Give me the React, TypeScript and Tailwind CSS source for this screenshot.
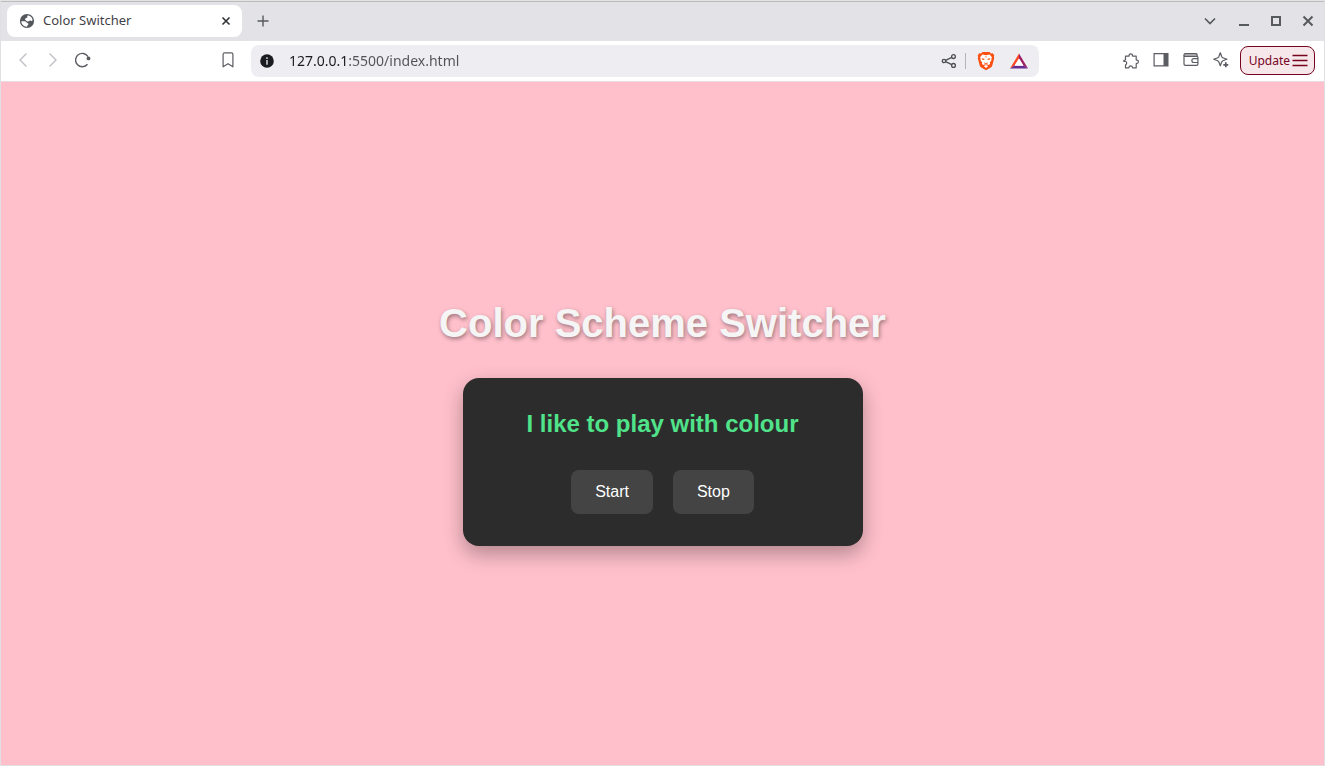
import { useEffect, useState, type ReactNode } from "react";

const SCHEMES = ["#ffc0cb", "#add8e6", "#98fb98", "#ffdab9", "#d8bfd8"];

function IconButton({ label, className = "", children }: { label: string; className?: string; children: ReactNode }) {
  return (
    <button type="button" aria-label={label} className={`flex shrink-0 items-center justify-center ${className}`}>
      {children}
    </button>
  );
}

function GlobeIcon() {
  return (
    <svg width="16" height="16" viewBox="0 0 16 16" aria-hidden="true" className="shrink-0">
      <circle cx="8" cy="8" r="7.100" fill="#54585c" />
      <path d="M8.600 2.400c1.500 0 2.700.6 3.600 1.600.8.9 1.300 2 1.400 3.300-.5.900-1.500.7-2.200.3-.5-.3-.9.100-1.300.5-.6.500-1.600.500-2.200.1-.7-.3-.6-1.100-1.300-1.200-.9-.2-.9-1.200-.2-1.600.8-.4 1.600-.2 1.900-.9.200-.7-.3-1.400.3-2.100Z" fill="#fff" />
      <path d="M2.300 8.300h3.400c1.300.1 1.700.7 2.100 1.400.400.600 1.500.3 1.700 1.100.2.900-.9 1-1 1.700-.1.600-.2 1.100-.6 1.200-3.100 0-5.600-2.300-5.600-5.400Z" fill="#fff" />
    </svg>
  );
}

function BraveIcon() {
  return (
    <svg width="18" height="20" viewBox="0 0 18 20" aria-hidden="true">
      <path d="M5.500 1h7l1.500 1.400 1.800-.1 1.500 2.300-.5 1.500.4 1.200-1.900 7.100q-.4 1.300-1.500 2L9 19.300l-4.800-2.900q-1.100-.7-1.500-2L.8 7.300l.4-1.200-.5-1.500 1.500-2.300 1.800.1Z" fill="#fb4f12" />
      <path d="M5.300 3.600L9 4.200l3.700-.6 2.200 2.600-.6 1.900.3.900-1.800 2.500.3 1.500-1.800 1-1-.7-1.300.4-1.300-.4-1 .7-1.800-1 .3-1.500L3.400 9l.3-.9-.6-1.900Z" fill="#fff" />
      <path d="M9 13.900l2.300 1.200L9 16.900l-2.300-1.800Z" fill="#fff" />
      <path d="M4.400 7.300l3.100.4-.3 1.400-1.700-.4ZM13.600 7.300l-3.100.4.3 1.400 1.700-.4ZM7.500 11.300L9 12.500l1.500-1.200.3.900L9 13.400l-1.800-1.200ZM8.300 5.200h1.400L9 7Z" fill="#fb4f12" />
    </svg>
  );
}

function TabStrip() {
  return (
    <header className="flex h-[39px] items-center bg-[#e3e2e7] pb-0.5 pl-1.5">
      <div className="flex h-8 w-[235px] items-center rounded-lg bg-white pr-2 pl-3">
        <GlobeIcon />
        <span className="ml-2 flex-1 truncate text-[13px] text-[#3f4247]">Color Switcher</span>
        <IconButton label="Close tab" className="size-4">
          <svg width="10" height="10" viewBox="0 0 10 10" stroke="#303236" strokeWidth="1.600" aria-hidden="true">
            <path d="M1.500 1.500l7 7M8.500 1.500l-7 7" />
          </svg>
        </IconButton>
      </div>
      <IconButton label="New tab" className="ml-[5px] size-8">
        <svg width="12" height="12" viewBox="0 0 12 12" stroke="#56595e" strokeWidth="1.400" aria-hidden="true">
          <path d="M6 .5v11M.5 6h11" />
        </svg>
      </IconButton>
      <div className="ml-auto flex items-center">
        <IconButton label="Search tabs" className="mr-0.5 size-8">
          <svg width="12" height="12" viewBox="0 0 12 12" fill="none" stroke="#56595e" strokeWidth="1.700" aria-hidden="true">
            <path d="M1 3.500l5 5 5-5" />
          </svg>
        </IconButton>
        <IconButton label="Minimize" className="size-8">
          <svg width="12" height="12" viewBox="0 0 12 12" aria-hidden="true">
            <path d="M1 9h10v2H1z" fill="#56595e" />
          </svg>
        </IconButton>
        <IconButton label="Maximize" className="size-8">
          <svg width="12" height="12" viewBox="0 0 12 12" fill="none" stroke="#56595e" strokeWidth="2" aria-hidden="true">
            <path d="M2 2h8v8H2z" />
          </svg>
        </IconButton>
        <IconButton label="Close window" className="size-8">
          <svg width="12" height="12" viewBox="0 0 12 12" stroke="#56595e" strokeWidth="2" aria-hidden="true">
            <path d="M1.500 1.500l9 9M10.500 1.500l-9 9" />
          </svg>
        </IconButton>
      </div>
    </header>
  );
}

function AddressBar() {
  return (
    <div className="ml-2 flex h-8 flex-1 items-center rounded-lg bg-[#eeedf2] pr-2.5 pl-[9px]">
      <svg width="14" height="14" viewBox="0 0 14 14" aria-hidden="true" className="shrink-0">
        <circle cx="7" cy="7" r="6.800" fill="#1b1b22" />
        <path d="M6.200 3.300h1.600v1.600H6.200zM6.200 6h1.600v4.700H6.200z" fill="#c9c9d0" />
      </svg>
      <input
        type="text"
        aria-label="Address"
        defaultValue="127.0.0.1:5500/index.html"
        spellCheck={false}
        className="ml-[15px] min-w-0 flex-1 bg-[linear-gradient(to_right,#1b1b20_60px,#505257_60px)] bg-clip-text text-sm text-transparent caret-black outline-none"
      />
      <IconButton label="Share" className="size-6">
        <svg width="16" height="16" viewBox="0 0 16 16" fill="none" stroke="#4c4e54" strokeWidth="1.300" aria-hidden="true">
          <circle cx="3" cy="8" r="1.700" />
          <circle cx="12.500" cy="3.600" r="1.900" />
          <circle cx="12.500" cy="12.400" r="1.900" />
          <path d="M4.600 7.300l6.200-2.900M4.600 8.700l6.200 2.900" />
        </svg>
      </IconButton>
      <span className="mx-1 h-4 w-px bg-[#b4b4b9]" />
      <IconButton label="Brave Shields" className="ml-1.5 h-6 w-5">
        <BraveIcon />
      </IconButton>
      <IconButton label="Brave Rewards" className="ml-[13px] h-6 w-5">
        <svg width="18" height="16" viewBox="0 0 18 16" aria-hidden="true">
          <path d="M9 .5L0 15.500l4.500-2.700L9 5.500Z" fill="#ff4724" />
          <path d="M9 .5v5l4.500 7.300 4.500 2.700Z" fill="#9e1f63" />
          <path d="M0 15.500h18l-4.500-2.900h-9Z" fill="#662d91" />
          <path d="M9 5.500l4.500 7.200h-9Z" fill="#fff" />
        </svg>
      </IconButton>
    </div>
  );
}

function Toolbar() {
  return (
    <nav aria-label="Browser toolbar" className="flex h-10 items-center bg-white pr-[9px] pl-[7px]">
      <IconButton label="Back" className="h-8 w-[30px] pb-0.5">
        <svg width="16" height="16" viewBox="0 0 16 16" fill="none" stroke="#bfc0c4" strokeWidth="1.400" aria-hidden="true">
          <path d="M11.500 1.500L5 8l6.500 6.500" />
        </svg>
      </IconButton>
      <IconButton label="Forward" className="h-8 w-[30px] pb-0.5">
        <svg width="16" height="16" viewBox="0 0 16 16" fill="none" stroke="#bfc0c4" strokeWidth="1.400" aria-hidden="true">
          <path d="M4.500 1.500L11 8l-6.500 6.500" />
        </svg>
      </IconButton>
      <IconButton label="Reload" className="h-8 w-[30px] pb-0.5">
        <svg width="16" height="16" viewBox="0 0 16 16" fill="none" stroke="#5b5d63" strokeWidth="1.400" aria-hidden="true">
          <path d="M12.500 12.300A6.700 6.700 0 1 1 13 4.600" />
          <circle cx="13.500" cy="6.400" r="1.900" fill="#5b5d63" stroke="none" />
        </svg>
      </IconButton>
      <IconButton label="Bookmark this tab" className="ml-[115px] h-8 w-[30px] pb-0.5">
        <svg width="12" height="16" viewBox="0 0 12 16" fill="none" stroke="#5b5d63" strokeWidth="1.200" strokeLinejoin="round" aria-hidden="true">
          <path d="M2.600.8h6.800q1.500 0 1.500 1.500v12.500L6 11.700l-4.900 3.100V2.300Q1.100.8 2.600.8Z" />
        </svg>
      </IconButton>
      <AddressBar />
      <div className="ml-[77px] flex items-center">
        <IconButton label="Extensions" className="h-8 w-[30px]">
          <svg width="16" height="16" viewBox="0 0 16 16" fill="none" stroke="#5b5d63" strokeWidth="1.200" strokeLinejoin="round" aria-hidden="true">
            <path d="M2.500 3.200h3.300c.3 0 .4-.3.300-.6C5.900 1.500 6.800.8 7.700.8s1.900.7 1.700 1.800c-.1.300.1.600.4.600h3.400v3.500c0 .4.300.5.600.4.900-.1 1.600.7 1.600 1.600s-.7 1.800-1.600 1.700c-.3-.1-.6 0-.6.400v4.100H9.900c-.4 0-.5-.3-.5-.6 0-.9-.8-1.500-1.700-1.500s-1.700.6-1.700 1.500c0 .300-.1.600-.5.600h-3v-2.500c0-.5.2-.7.500-.9.500-.3.700-.9.700-1.400 0-.9-.6-1.600-1.500-1.600H.900V7.300h.7c.5 0 .9-.3.900-.8Z" />
          </svg>
        </IconButton>
        <IconButton label="Side panel" className="h-8 w-[30px] pb-0.5">
          <svg width="16" height="16" viewBox="0 0 16 16" fill="none" aria-hidden="true">
            <path d="M1.100 1.600h13.800v12.300H1.100z" stroke="#5b5d63" strokeWidth="1.200" />
            <path d="M10.500 1.500H15v12.500h-4.500z" fill="#5b5d63" />
          </svg>
        </IconButton>
        <IconButton label="Wallet" className="h-8 w-[30px] pb-0.5">
          <svg width="16" height="16" viewBox="0 0 16 16" fill="none" stroke="#5b5d63" strokeWidth="1.200" aria-hidden="true">
            <path d="M1 4V3q0-1.300 1.300-1.300h10.800q1 0 1 1V4" fill="#bcbdc0" />
            <path d="M1 3.500v8.600q0 1.300 1.300 1.300h11.400q1.200 0 1.200-1.300V5.500q0-1.200-1.200-1.200H1" />
            <path d="M15 6.600h-4.200a1.900 1.900 0 0 0 0 3.900H15" />
          </svg>
        </IconButton>
        <IconButton label="Leo AI" className="h-8 w-[30px] pb-0.5">
          <svg width="16" height="16" viewBox="0 0 16 16" fill="none" stroke="#5b5d63" strokeWidth="1.200" strokeLinejoin="round" aria-hidden="true">
            <path d="M7.300.8l1.500 4 1 1 4.100 1.500-4.100 1.500-1 1-1.500 4-1.500-4-1-1L.7 7.300l4.100-1.500 1-1Z" />
            <path d="M12.800 10.300v5M10.300 12.800h5" strokeWidth="1.700" />
          </svg>
        </IconButton>
      </div>
      <button
        type="button"
        className="mb-px ml-1 flex h-[29px] shrink-0 items-center gap-0.5 rounded-lg border border-[#77041f] bg-[#f6e7ea] pr-1.5 pl-2 text-xs text-[#77041f]"
      >
        Update
        <svg width="16" height="14" viewBox="0 0 16 14" stroke="#77041f" strokeWidth="1.300" aria-hidden="true">
          <path d="M.5 1.500h15M.5 6.500h15M.5 11.500h15" />
        </svg>
      </button>
    </nav>
  );
}

function ActionButton({ onClick, children }: { onClick: () => void; children: ReactNode }) {
  return (
    <button
      type="button"
      onClick={onClick}
      className="rounded-lg bg-[#444444] px-6 py-3 text-base leading-5 text-white hover:bg-[#555555]"
    >
      {children}
    </button>
  );
}

export default function App() {
  const [running, setRunning] = useState(false);
  const [scheme, setScheme] = useState(0);

  useEffect(() => {
    if (!running) return;
    const timer = setInterval(() => setScheme((s) => (s + 1) % SCHEMES.length), 1000);
    return () => clearInterval(timer);
  }, [running]);

  return (
    <div className="flex min-h-screen flex-col border-x border-b border-[#e0dfe4] bg-[#e3e2e7] font-['Noto_Sans',sans-serif]">
      <div className="mt-px border-t border-[#b9bdb9]">
        <TabStrip />
      </div>
      <Toolbar />
      <main
        className="flex flex-1 flex-col items-center justify-center gap-8 border-t border-[#e6dde1] px-4 pb-0.5 font-['Liberation_Sans',Arial,sans-serif]"
        style={{ backgroundColor: SCHEMES[scheme] }}
      >
        <h1 className="text-center text-[40px] leading-[46px] font-bold text-[#f5f5f5] [text-shadow:1px_2px_4px_rgba(0,0,0,0.4)]">
          Color Scheme Switcher
        </h1>
        <section className="flex w-full max-w-[400px] flex-col items-center gap-8 rounded-2xl bg-[#2c2c2c] p-8 shadow-[0_8px_20px_rgba(0,0,0,0.3)]">
          <h2 className="text-center text-2xl leading-7 font-bold text-[#50e38a]">I like to play with colour</h2>
          <div className="flex gap-5">
            <ActionButton onClick={() => setRunning(true)}>Start</ActionButton>
            <ActionButton onClick={() => setRunning(false)}>Stop</ActionButton>
          </div>
        </section>
      </main>
    </div>
  );
}
